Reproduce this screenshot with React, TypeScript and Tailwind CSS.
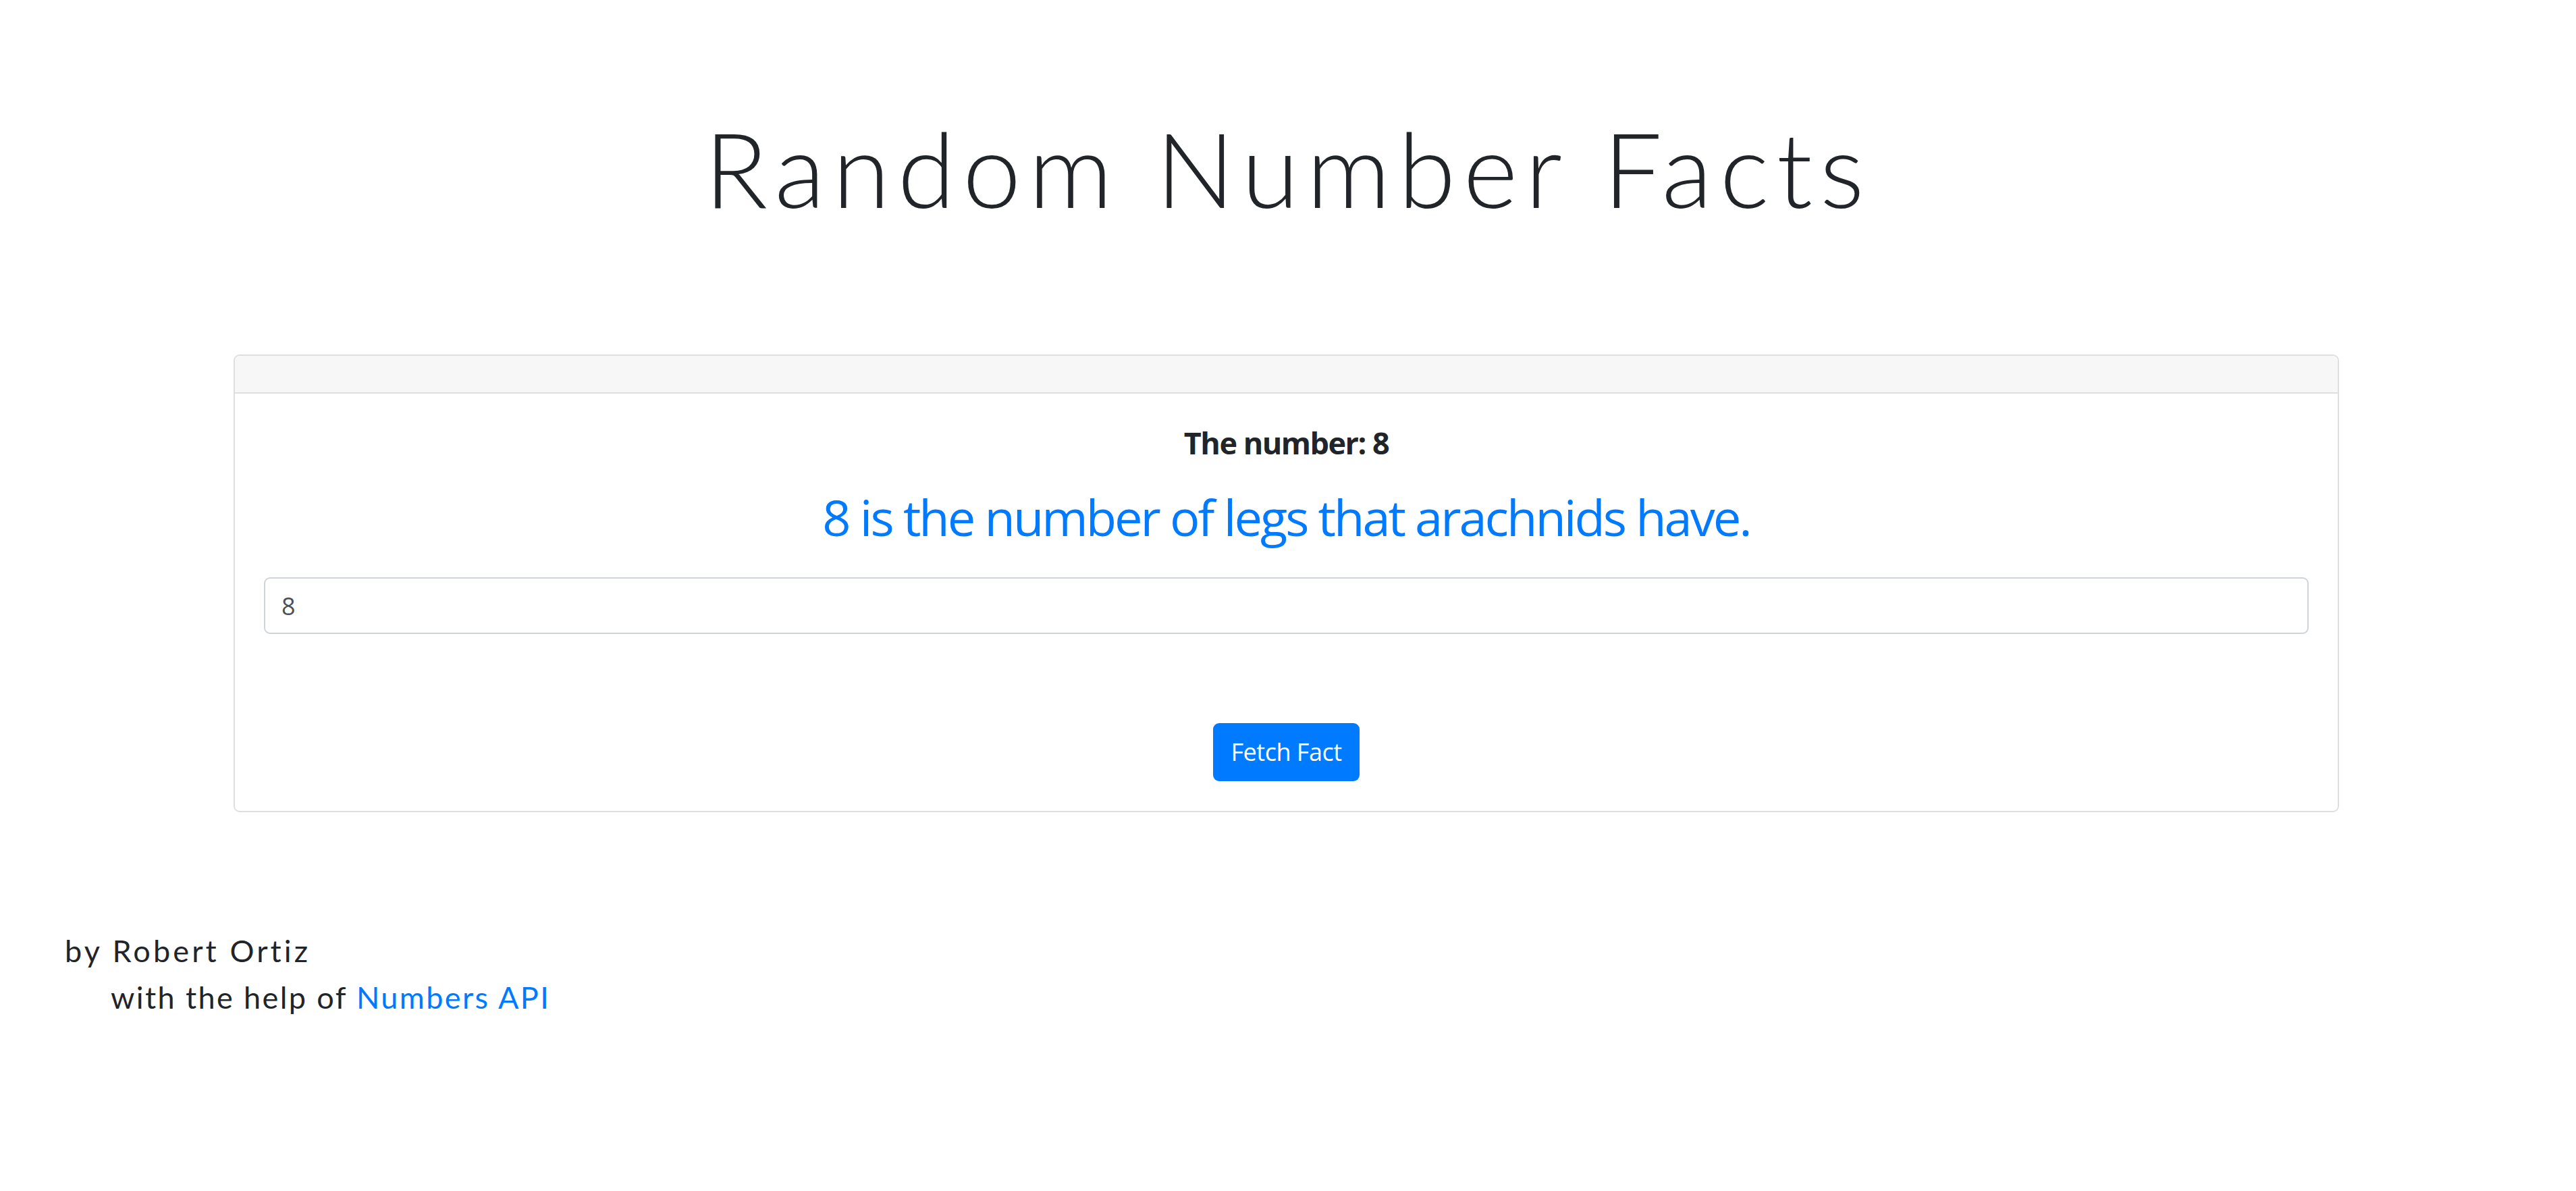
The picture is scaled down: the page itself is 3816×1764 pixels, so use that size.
export default function App() {
  return (
    <div className="min-h-screen bg-white text-[#212529]">
      {/* Title */}
      <h1 className="pt-[158px] text-center font-['Lato',sans-serif] text-[155px] font-light leading-[180px] tracking-[11px]">
        Random Number Facts
      </h1>

      {/* Card */}
      <div className="ml-[346px] mt-[187px] w-[3119px] rounded-[9px] border-2 border-[#dfdfdf]">
        <div className="h-[56px] rounded-t-[8px] border-b-2 border-[#dfdfdf] bg-[#f7f7f7]"></div>
        <div className="px-[43px] pt-[46px] pb-[44px] font-['Open_Sans',sans-serif]">
          <h5 className="text-center text-[45px] font-bold leading-[54px] tracking-[-1.5px]">The number: 8</h5>
          <h3 className="mt-[39px] text-center text-[74px] leading-[88px] tracking-[-3px] text-[#007bff]">
            8 is the number of legs that arachnids have.
          </h3>
          <input
            type="text"
            defaultValue="8"
            className="mt-[45px] block h-[84px] w-full rounded-[9px] border-2 border-[#ced4da] px-[24px] text-[36px] text-[#495057] outline-none"
          />
          <div className="mt-[132px] flex justify-center">
            <button className="h-[86px] w-[217px] rounded-[9px] bg-[#007bff] text-[36px] text-white tracking-[-0.5px]">
              Fetch Fact
            </button>
          </div>
        </div>
      </div>

      {/* Footer */}
      <footer className="mt-[171px] pl-[96px] font-['Lato',sans-serif] text-[45px] leading-[69px]">
        <p className="tracking-[4.1px]">by Robert Ortiz</p>
        <p className="pl-[68px] tracking-[2.4px]">
          with the help of <a href="#" className="text-[#007bff]">Numbers API</a>
        </p>
      </footer>
    </div>
  );
}
